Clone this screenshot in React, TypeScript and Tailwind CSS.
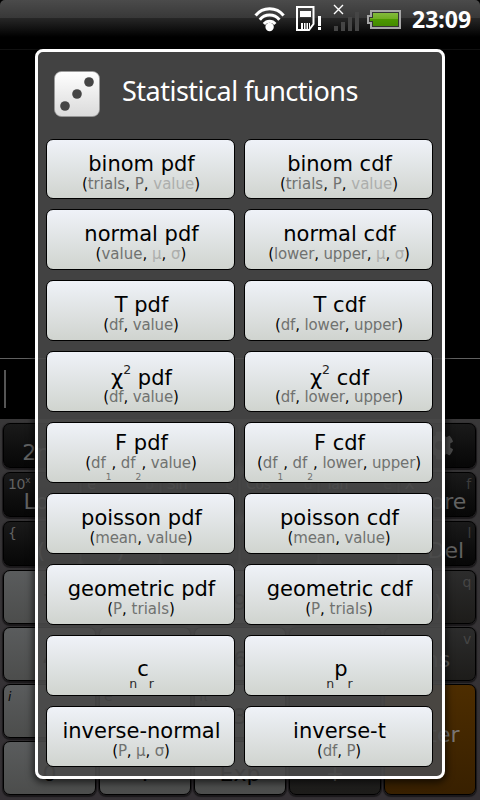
import React from "react";
import { FaCog } from "react-icons/fa";

type Part = [text: string, tone?: "mid" | "light" | "sub"];
type Fn = { title: React.ReactNode; args?: Part[]; pad: string; tight?: boolean; track?: string };

const tones = {
  mid: "text-[#707270]",
  light: "text-[#acaeac]",
  sub: "relative top-3 inline-block w-[6px] text-[9px] leading-none text-[#707270]",
};

const chi = (tail: string) => (
  <>
    χ<span className="relative -top-[11px] text-[12.5px] text-[#222]">2</span> {tail}
  </>
);

const choose = (letter: string) => (
  <>
    <span className="relative top-3 text-[12.5px] text-[#2a2a2a]">n</span>
    {letter}
    <span className="relative top-3 text-[12.5px] text-[#2a2a2a]">r</span>
  </>
);

const std = "pt-3";
const narrow = "tracking-[-0.14px]";

const functions: Fn[] = [
  { title: "binom pdf", pad: std, args: [["("], ["trials", "mid"], [", "], ["P", "mid"], [", "], ["value", "light"], [")"]] },
  { title: "binom cdf", pad: std, args: [["("], ["trials", "mid"], [", "], ["P", "mid"], [", "], ["value", "light"], [")"]] },
  { title: "normal pdf", pad: std, args: [["("], ["value", "mid"], [", "], ["μ", "light"], [", "], ["σ", "light"], [")"]] },
  { title: "normal cdf", pad: std, track: narrow, args: [["("], ["lower", "mid"], [", "], ["upper", "mid"], [", "], ["μ", "light"], [", "], ["σ", "light"], [")"]] },
  { title: "T pdf", pad: std, track: narrow, args: [["("], ["df", "mid"], [", "], ["value", "mid"], [")"]] },
  { title: "T cdf", pad: std, track: narrow, args: [["("], ["df", "mid"], [", "], ["lower", "mid"], [", "], ["upper", "mid"], [")"]] },
  { title: chi("pdf"), pad: "pt-[14px]", track: narrow, tight: true, args: [["("], ["df", "mid"], [", "], ["value", "mid"], [")"]] },
  { title: chi("cdf"), pad: "pt-[14px]", track: narrow, tight: true, args: [["("], ["df", "mid"], [", "], ["lower", "mid"], [", "], ["upper", "mid"], [")"]] },
  { title: "F pdf", pad: "pt-2", track: narrow, args: [["("], ["df", "mid"], ["1", "sub"], [", "], ["df", "mid"], ["2", "sub"], [", "], ["value", "mid"], [")"]] },
  { title: "F cdf", pad: "pt-2", track: narrow, args: [["("], ["df", "mid"], ["1", "sub"], [", "], ["df", "mid"], ["2", "sub"], [", "], ["lower", "mid"], [", "], ["upper", "mid"], [")"]] },
  { title: "poisson pdf", pad: std, track: narrow, args: [["("], ["mean", "mid"], [", "], ["value", "mid"], [")"]] },
  { title: "poisson cdf", pad: std, track: narrow, args: [["("], ["mean", "mid"], [", "], ["value", "mid"], [")"]] },
  { title: "geometric pdf", pad: std, args: [["("], ["P", "mid"], [", "], ["trials", "mid"], [")"]] },
  { title: "geometric cdf", pad: std, args: [["("], ["P", "mid"], [", "], ["trials", "mid"], [")"]] },
  { title: choose("c"), pad: "pt-[21px]" },
  { title: choose("p"), pad: "pt-[21px]" },
  { title: "inverse-normal", pad: std, track: narrow, args: [["("], ["P", "mid"], [", "], ["μ", "mid"], [", "], ["σ", "mid"], [")"]] },
  { title: "inverse-t", pad: std, track: narrow, args: [["("], ["df", "mid"], [", "], ["P", "mid"], [")"]] },
];

function FnButton({ fn }: { fn: Fn }) {
  return (
    <button
      className={`flex flex-col items-center overflow-hidden rounded-[7px] border border-black bg-linear-to-b from-[#eff2f8] to-[#d0d4cf] whitespace-pre text-black ${fn.pad}`}
    >
      <span className="h-6 shrink-0 pl-0.5 text-[21px] leading-6">{fn.title}</span>
      {fn.args && (
        <span className={`h-[18px] shrink-0 pl-px text-[15px] leading-[18px] ${fn.tight ? "-mt-0.5" : "-mt-px"} ${fn.track ?? ""}`}>
          {fn.args.map(([text, tone], i) => (
            <span key={i} className={tone ? tones[tone] : ""}>
              {text}
            </span>
          ))}
        </span>
      )}
    </button>
  );
}

function StatusBar() {
  return (
    <header className="h-[38px] bg-black">
      <div className="flex h-[38px] items-start rounded-t-[5px] bg-[linear-gradient(#4b4b4b_0px,#383838_18px,#272727_18px,#000_37px)] pl-[254px]">
        <svg className="mt-1.5 h-[26px] w-[31px]" viewBox="0 0 31 26" fill="none" stroke="#fff" strokeWidth="3">
          <path d="M1.600 9.500A18 18 0 0 1 29.600 9.500" />
          <path d="M5.800 13.800A12.500 12.500 0 0 1 25.400 13.800" />
          <path d="M9.900 18A7.200 7.200 0 0 1 21.300 18" />
          <circle cx="15.6" cy="21" r="4.2" fill="#fff" stroke="none" />
        </svg>
        <svg className="mt-1.5 ml-[11px] h-[26px] w-[26px]" viewBox="0 0 26 26">
          <path d="M1 1H17.500V18L13 24H1Z" fill="none" stroke="#fff" strokeWidth="2" />
          <path d="M4 5H15V11H4ZM5 17H7V23H5ZM8 17H9.5V23H8ZM10.500 17H12V23H10.500ZM13 17H14V21.500L13 23Z" fill="#fff" />
          <path d="M22 10H25V20H22ZM22 21H25V24H22Z" fill="#fff" />
        </svg>
        <svg className="mt-1 ml-[11px] h-7 w-[27px]" viewBox="0 0 27 28">
          <path d="M1 22H5V27H1ZM8 18H12V27H8ZM15 13H19V27H15ZM22 8H26V27H22Z" fill="#454545" />
          <path d="M1 1L10 10M10 1L1 10" stroke="#fff" strokeWidth="1.4" />
        </svg>
        <svg className="mt-2.5 ml-[7px] h-[19px] w-[34px]" viewBox="0 0 34 19">
          <defs>
            <linearGradient id="charge" x2="0" y2="1">
              <stop offset="0" stopColor="#83bb3c" />
              <stop offset=".48" stopColor="#6fac20" />
              <stop offset=".5" stopColor="#4c9800" />
              <stop offset="1" stopColor="#438a00" />
            </linearGradient>
          </defs>
          <path d="M3 0H34V19H3V14H0V5H3Z" fill="#a6a6a6" />
          <path d="M5 2H32V17H5V12H2V7H5Z" fill="#333" />
          <path d="M6 3H31V16H6V11H3V8H6Z" fill="url(#charge)" />
        </svg>
        <span className="mt-1 ml-[11px] font-['Noto_Sans',sans-serif] text-[23px] leading-[30px] font-bold text-white">
          23:09
        </span>
      </div>
    </header>
  );
}

type KeyDef = { main?: React.ReactNode; left?: React.ReactNode; right?: string; look: string; shift?: string };

const black = "bg-linear-to-b from-[#1a1a1a] to-[#070707] text-[#626262]";
const gray = "bg-linear-to-b from-[#5a5c5d] to-[#4c4d4c] text-black";
const dark = "bg-linear-to-b from-[#2c2c2c] to-[#1d1c1a] text-[#626262]";

const topKeys: KeyDef[] = [
  { main: "2nd", look: black, shift: "pl-1" }, { look: black }, { look: black }, { look: black }, { look: black },
  { main: <FaCog className="mt-[-10px] size-[29px] text-[#4a4a4a]" />, look: black, shift: "pl-[3px]" },
  { main: "Log", left: <>10<span className="relative -top-1.5 text-[9px]">x</span></>, look: black, shift: "pl-1" },
  { main: "Ln", left: "e", right: "b", look: black },
  { main: "", left: "Sin", right: "c", look: black },
  { main: "", left: "Cos", right: "d", look: black },
  { main: "", left: "Tan", right: "e", look: black },
  { main: "more", left: "X", right: "f", look: black },
  { main: "(", left: "{", look: black }, { main: ")", look: black }, { main: "", look: black },
  { main: "^", look: black }, { main: "", look: black },
  { main: "Del", left: "In", right: "l", look: black, shift: "pl-4" },
];

const bigKeys: KeyDef[] = [
  { main: "7", look: gray }, { main: "8", look: gray }, { main: "9", look: gray }, { main: "÷", look: dark },
  { main: "(-)", right: "q", look: dark },
  { main: "4", look: gray }, { main: "5", look: gray }, { main: "6", look: gray }, { main: "×", look: dark },
  { main: "Ans", right: "v", look: dark },
  { main: "1", left: <i className="text-[12px]">i</i>, look: gray }, { main: "2", left: "e", look: gray },
  { main: "3", left: "π", look: gray }, { main: "−", look: dark },
  { main: "Enter", look: "row-span-2 bg-linear-to-b from-[#4d2d00] to-[#382000] text-[#7a7673] pt-[18px]" },
  { main: "0", look: gray }, { main: ".", look: gray }, { main: "Exp", look: gray }, { main: "+", look: dark },
];

function Key({ k, top }: { k: KeyDef; top: string }) {
  return (
    <div className={`flex flex-col rounded-[7px] border border-black shadow-[0_1px_1px_1px_#1a181a] ${k.look}`}>
      <div className="flex h-4 justify-between px-1 pt-[3px] text-[14px] leading-4 tracking-[-0.3px]">
        <span>{k.left}</span>
        <span className="opacity-50">{k.right}</span>
      </div>
      <div className={`flex justify-center text-[22px] leading-6 ${top} ${k.shift ?? ""}`}>{k.main}</div>
    </div>
  );
}

export default function App() {
  return (
    <div className="relative flex h-[800px] w-[480px] flex-col overflow-hidden bg-black font-['DejaVu_Sans',sans-serif]">
      <StatusBar />
      <div className="mt-[11px] h-[309px] border-t border-[#111]" />
      <div className="h-[61px] border-t border-[#606060] pt-[11px] pl-1">
        <div className="h-[38px] w-0.5 bg-[#555]" />
      </div>
      <main className="flex h-[381px] flex-col gap-[4px] bg-linear-to-b from-[#383738] to-[#343034] pt-1 pr-1 pl-[3px]">
        <div className="grid auto-rows-[45px] grid-cols-6 gap-x-[3px] gap-y-[4px]">
          {topKeys.map((k, i) => <Key key={i} k={k} top="pt-px" />)}
        </div>
        <div className="grid auto-rows-[54px] grid-cols-[93px_92px_92px_92px_92px] gap-[3px]">
          {bigKeys.map((k, i) => <Key key={i} k={k} top="pt-1" />)}
        </div>
      </main>

      <section className="absolute top-[49px] left-[35px] flex h-[730px] w-[410px] flex-col rounded-[8px] border-3 border-white bg-[#494949]/90 shadow-[0_2px_7px_2px_#0009]">
        <div className="flex h-[87px] items-start pt-[19px] pl-4">
          <svg className="size-[46px]" viewBox="0 0 46 46">
            <defs>
              <linearGradient id="die" x2="0" y2="1">
                <stop offset="0" stopColor="#fff" />
                <stop offset="1" stopColor="#dadada" />
              </linearGradient>
            </defs>
            <rect x=".5" y=".5" width="45" height="45" rx="7" fill="url(#die)" stroke="#999" strokeWidth=".7" />
            <g fill="#454545">
              <circle cx="35" cy="11" r="4.8" />
              <circle cx="23" cy="23" r="4.8" />
              <circle cx="11" cy="35" r="4.8" />
            </g>
          </svg>
          <h1 className="ml-[22px] font-['Noto_Sans',sans-serif] text-[27px] leading-10 tracking-[-0.5px] whitespace-nowrap text-white">
            Statistical functions
          </h1>
        </div>
        <div className="grid auto-rows-[61px] grid-cols-[189px_189px] grid-rows-[60px] gap-x-[9px] gap-y-2.5 pl-2">
          {functions.map((fn, i) => <FnButton key={i} fn={fn} />)}
        </div>
      </section>
    </div>
  );
}
